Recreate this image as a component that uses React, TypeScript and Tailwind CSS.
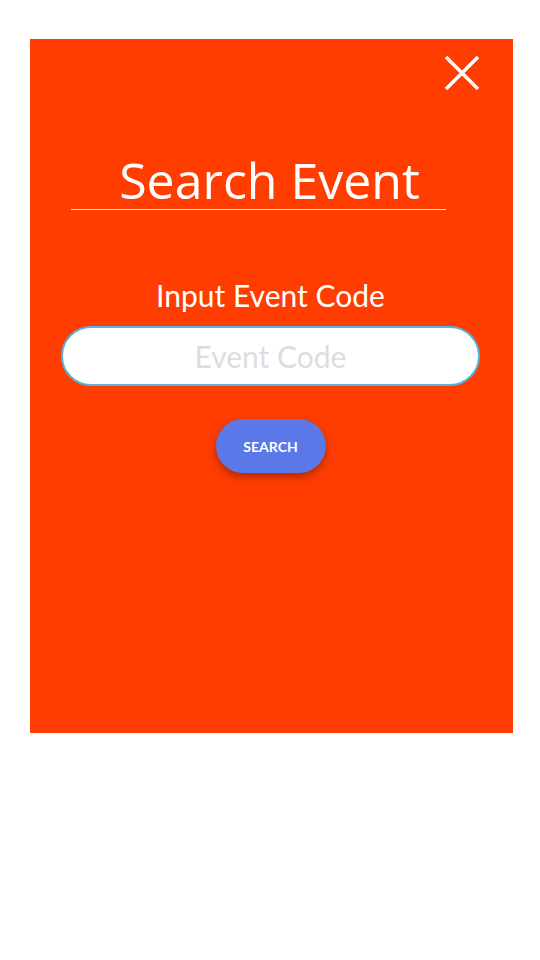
import React from "react";

export default function App() {
    return (
        <div className="w-[540px] h-[960px] bg-white pt-[39px] pl-[30px]">
            <div className="w-[483px] h-[694px] bg-[#ff3d00] flex flex-col items-center">
                <div className="w-full flex justify-end pt-[16px] pr-[33px]">
                    <svg width="36" height="36" viewBox="0 0 36 36">
                        <path d="M2 2 L34 34 M34 2 L2 34" stroke="white" strokeWidth="3.5" />
                    </svg>
                </div>
                <div className="mt-[60px] w-[375px] mr-[26px] border-b border-[#ffe0d6] flex justify-center">
                    <h1 className="ml-[22px] text-[50px] leading-[58px] text-white font-['Open_Sans',sans-serif]">
                        Search Event
                    </h1>
                </div>
                <div className="w-full flex flex-col items-center pr-[2px]">
                    <p className="mt-[67px] text-[30px] leading-[36px] text-white font-['Lato',sans-serif]">
                        Input Event Code
                    </p>
                    <input
                        type="text"
                        placeholder="Event Code"
                        className="mt-[13px] w-[419px] h-[60px] rounded-full bg-white border-2 border-[#55b5dc] text-center text-[30px] font-['Lato',sans-serif] placeholder:text-[#dddddd] outline-none"
                    />
                    <button className="mt-[33px] w-[110px] h-[54px] rounded-full bg-[#5a78e8] text-white text-[14px] font-bold font-['Lato',sans-serif] shadow-[0_4px_8px_rgba(0,0,0,0.3)]">
                        SEARCH
                    </button>
                </div>
            </div>
        </div>
    );
}
